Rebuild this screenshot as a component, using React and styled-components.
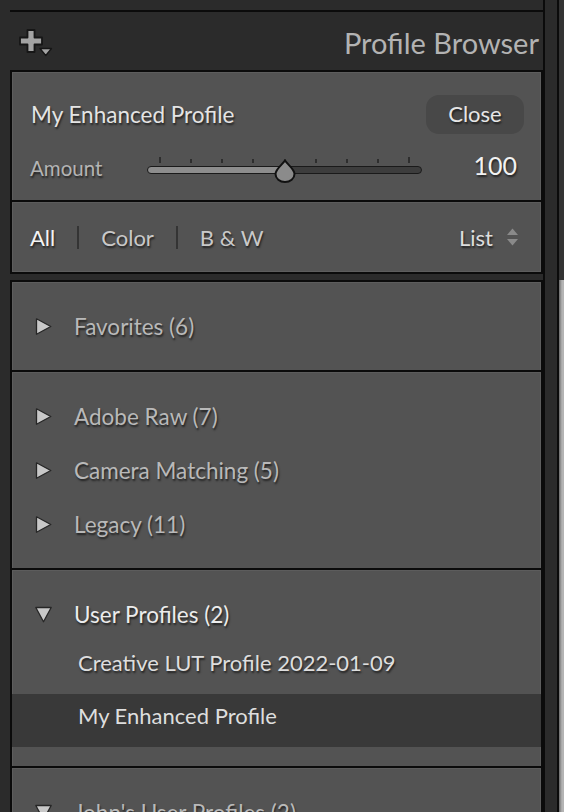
import React from 'react'
import styled, { createGlobalStyle } from 'styled-components'

const GlobalStyle = createGlobalStyle`
  html, body {
    margin: 0;
    padding: 0;
    background: #2b2b2b;
  }
  body {
    font-family: Lato, "Noto Sans", sans-serif;
    -webkit-font-smoothing: antialiased;
  }
`

const Screen = styled.div`
  display: flex;
  align-items: flex-start;
  width: 564px;
  height: 812px;
  overflow: hidden;
  background: #2b2b2b;
`

const Column = styled.div`
  flex: none;
  width: 545px;
  min-height: 812px;
  padding-top: 10px;
  box-sizing: border-box;
  border-right: 2px solid #0b0b0b;
`

const TopRule = styled.div`
  margin-left: 10px;
  height: 2px;
  background: #0b0b0b;
`

const Header = styled.header`
  height: 58px;
  padding: 3px 4px 0 19px;
  box-sizing: border-box;
  display: flex;
  align-items: center;
  justify-content: space-between;
`

const Title = styled.h1`
  margin: 0;
  font-weight: 400;
  font-size: 29px;
  color: #b3b3b3;
`

const Panel = styled.section`
  margin-left: 10px;
  margin-top: ${p => p.gap || 0}px;
  border: 2px solid #0b0b0b;
  background: #535353;
  box-shadow: inset 0 0 0 1px #5d5d5d;
`

const Divider = styled.div`
  height: 2px;
  background: #0b0b0b;
  box-shadow: 0 1px 0 #5c5c5c;
`

const Top = styled.div`
  padding: 23px 0 16px;
  display: flex;
  flex-direction: column;
  gap: 18px;
`

const TitleRow = styled.div`
  height: 39px;
  padding: 0 17px 0 19px;
  display: flex;
  align-items: center;
  justify-content: space-between;
`

const shadow = '1px 2px 2px rgba(0, 0, 0, 0.6)'

const ProfileName = styled.span`
  font-size: 22.5px;
  color: #e4e4e4;
  text-shadow: ${shadow};
`

const CloseButton = styled.button`
  width: 98px;
  height: 39px;
  border: none;
  border-radius: 13px;
  background: #484848;
  font-family: inherit;
  font-size: 22px;
  color: #e6e6e6;
  text-shadow: ${shadow};
  padding: 0 0 3px;
`

const AmountRow = styled.div`
  height: 32px;
  padding: 0 24px 0 18px;
  display: flex;
  align-items: center;
`

const AmountLabel = styled.span`
  width: 117px;
  flex: none;
  font-size: 20.5px;
  color: #b4b4b4;
  text-shadow: ${shadow};
`

const Value = styled.span`
  margin-left: auto;
  margin-top: -7px;
  font-size: 25px;
  color: #f2f2f2;
  text-shadow: ${shadow};
`

const SliderBox = styled.div`
  position: relative;
  flex: none;
  width: 275px;
  height: 26px;
  margin-top: 3px;
  display: flex;
  flex-direction: column;
  gap: 3px;
`

const TickRow = styled.div`
  height: 6px;
  margin: 0 12px;
  display: flex;
  justify-content: space-between;
  align-items: flex-end;
`

const Tick = styled.span`
  width: 2px;
  height: ${p => (p.end ? 6 : 4)}px;
  background: #2e2e2e;
`

const Track = styled.div`
  height: 8px;
  box-sizing: border-box;
  border: 1.5px solid #1a1a1a;
  border-radius: 5px;
  background: linear-gradient(to right, #8d8d8d 0 50%, #3d3d3d 50% 100%);
`

const Thumb = styled.svg`
  position: absolute;
  left: 127px;
  top: 2px;
`

const FilterRow = styled.div`
  height: 70px;
  padding: 0 23px 0 18px;
  display: flex;
  align-items: center;
  gap: 22px;
`

const Filter = styled.span`
  font-size: 22px;
  color: ${p => (p.active ? '#f4f4f4' : '#c9c9c9')};
  text-shadow: ${shadow};
`

const Sep = styled.span`
  width: 2px;
  height: 23px;
  background: #343434;
`

const ViewMenu = styled.span`
  margin-left: auto;
  display: flex;
  align-items: center;
  gap: 14px;
  font-size: 22px;
  color: #dedede;
  text-shadow: ${shadow};
`

const Group = styled.div`
  padding: 17px 0 ${p => p.bottom || 17}px;
`

const GroupRow = styled.div`
  height: 54px;
  padding-left: 23px;
  display: flex;
  align-items: center;
  gap: 22px;
  font-size: 22.5px;
  color: ${p => (p.open ? '#ececec' : '#b9b9b9')};
  text-shadow: ${shadow};
`

const Item = styled.div`
  height: 53px;
  padding: 0 0 10px 66px;
  box-sizing: border-box;
  display: flex;
  align-items: center;
  font-size: 22px;
  color: #dedede;
  background: ${p => (p.selected ? '#393939' : 'transparent')};
  text-shadow: ${p => (p.selected ? 'none' : shadow)};
`

const Strip = styled.div`
  flex: 1;
  align-self: stretch;
  display: flex;
  justify-content: flex-end;
`

const ScrollTrack = styled.div`
  width: 5px;
  border-left: 2px solid #0b0b0b;
  background: #333;
  display: flex;
  flex-direction: column;
  padding-top: 280px;
`

const ScrollThumb = styled.div`
  flex: 1;
  background: linear-gradient(to right, #6a6a6a, #b4b4b4 60%);
`

const Icon = styled.svg`
  flex: none;
  display: block;
`

const PlusIcon = () => (
  <Icon width="34" height="28" viewBox="0 0 34 28">
    <polygon
      points="8.5,1 15.5,1 15.5,8.5 23,8.5 23,15.5 15.5,15.5 15.5,23 8.5,23 8.5,15.5 1,15.5 1,8.5 8.5,8.5"
      fill="#a3a3a3"
      stroke="#161616"
      strokeWidth="1.8"
      strokeLinejoin="round"
    />
    <polygon points="21,19.5 32.5,19.5 26.75,26.5" fill="#a3a3a3" stroke="#161616" strokeWidth="1.3" strokeLinejoin="round" />
  </Icon>
)

const Arrow = ({ open }) => (
  <Icon width="17" height="17" viewBox="0 0 17 17">
    <polygon
      points={open ? '0.8,1.5 16.2,1.5 8.5,15.8' : '1.5,0.8 15.8,8.5 1.5,16.2'}
      fill="#c8c8c8"
      stroke="#262626"
      strokeWidth="1.3"
      strokeLinejoin="round"
    />
  </Icon>
)

const UpDown = () => (
  <Icon width="11" height="18" viewBox="0 0 11 18">
    <polygon points="0,7 5.5,0.5 11,7" fill="#8a8a8a" />
    <polygon points="0,11 11,11 5.5,17.5" fill="#8a8a8a" />
  </Icon>
)

const Slider = () => (
  <SliderBox>
    <TickRow>
      {Array.from({ length: 9 }).map((_, i) => (
        <Tick key={i} end={i === 0 || i === 8} />
      ))}
    </TickRow>
    <Track />
    <Thumb width="22" height="24" viewBox="0 0 22 24">
      <path
        d="M11 1.5 C 14 6, 20.5 10, 20.5 15 A 9.5 8 0 0 1 1.5 15 C 1.5 10, 8 6, 11 1.5 Z"
        fill="#8b8b8b"
        stroke="#111"
        strokeWidth="2"
        strokeLinejoin="round"
      />
    </Thumb>
  </SliderBox>
)

const groups = [
  { items: ['Favorites (6)'] },
  { items: ['Adobe Raw (7)', 'Camera Matching (5)', 'Legacy (11)'] },
]

export default function App() {
  return (
    <>
      <GlobalStyle />
      <Screen>
        <Column>
          <TopRule />
          <Header>
            <PlusIcon />
            <Title>Profile Browser</Title>
          </Header>

          <Panel>
            <Top>
              <TitleRow>
                <ProfileName>My Enhanced Profile</ProfileName>
                <CloseButton>Close</CloseButton>
              </TitleRow>
              <AmountRow>
                <AmountLabel>Amount</AmountLabel>
                <Slider />
                <Value>100</Value>
              </AmountRow>
            </Top>
            <Divider />
            <FilterRow>
              <Filter active>All</Filter>
              <Sep />
              <Filter>Color</Filter>
              <Sep />
              <Filter>B &amp; W</Filter>
              <ViewMenu>
                List
                <UpDown />
              </ViewMenu>
            </FilterRow>
          </Panel>

          <Panel gap={6}>
            {groups.map((g, i) => (
              <React.Fragment key={i}>
                <Group>
                  {g.items.map(name => (
                    <GroupRow key={name}>
                      <Arrow />
                      {name}
                    </GroupRow>
                  ))}
                </Group>
                <Divider />
              </React.Fragment>
            ))}
            <Group bottom={19}>
              <GroupRow open>
                <Arrow open />
                User Profiles (2)
              </GroupRow>
              <Item>Creative LUT Profile 2022-01-09</Item>
              <Item selected>My Enhanced Profile</Item>
            </Group>
            <Divider />
            <Group>
              <GroupRow>
                <Arrow open />
                John's User Profiles (2)
              </GroupRow>
            </Group>
          </Panel>
        </Column>
        <Strip>
          <ScrollTrack>
            <ScrollThumb />
          </ScrollTrack>
        </Strip>
      </Screen>
    </>
  )
}
